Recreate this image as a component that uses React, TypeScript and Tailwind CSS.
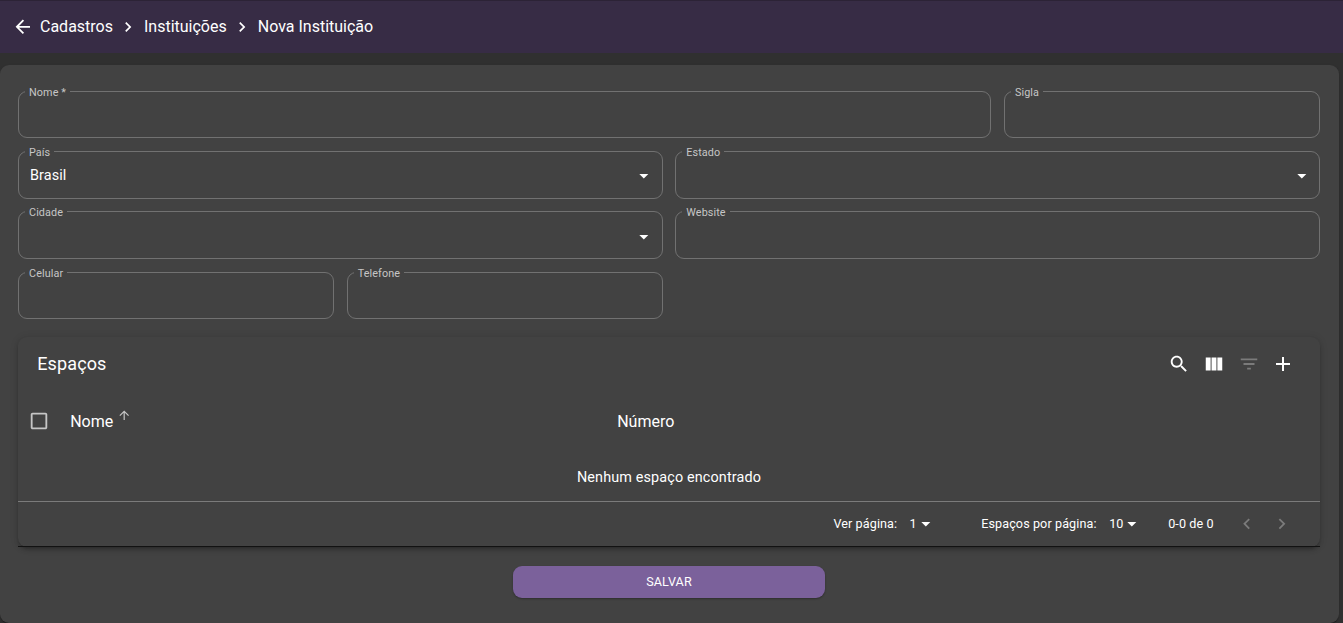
import React from "react";

function Icon({ d, className }: { d: string; className: string }) {
  return (
    <svg viewBox="0 0 24 24" fill="currentColor" aria-hidden="true" className={`block shrink-0 ${className}`}>
      <path d={d} />
    </svg>
  );
}

const arrowBack = "M20 11H7.83l5.59-5.59L12 4l-8 8 8 8 1.41-1.41L7.83 13H20v-2z";
const chevronRight = "M10 6L8.59 7.41 13.17 12l-4.58 4.59L10 18l6-6z";
const chevronLeft = "M15.41 7.41L14 6l-6 6 6 6 1.41-1.41L10.83 12z";
const dropDown = "M7 10l5 5 5-5z";
const search =
  "M15.5 14h-.79l-.28-.27C15.41 12.59 16 11.11 16 9.5 16 5.91 13.09 3 9.5 3S3 5.91 3 9.5 5.91 16 9.5 16c1.61 0 3.09-.59 4.23-1.57l.27.28v.79l5 4.99L20.49 19l-4.99-5zm-6 0C7.01 14 5 11.99 5 9.5S7.01 5 9.5 5 14 7.01 14 9.5 11.99 14 9.5 14z";
const viewColumn = "M14.67 5v14H9.33V5h5.34zm1 14H21V5h-5.33v14zm-7.34 0V5H3v14h5.33z";
const filterList = "M10 18h4v-2h-4v2zM3 6v2h18V6H3zm3 7h12v-2H6v2z";
const add = "M19 13h-6v6h-2v-6H5v-2h6V5h2v6h6v2z";
const arrowUp = "M4 12l1.41 1.41L11 7.83V20h2V7.83l5.58 5.59L20 12l-8-8-8 8z";
const checkboxBlank =
  "M19 5v14H5V5h14m0-2H5c-1.1 0-2 .9-2 2v14c0 1.1.9 2 2 2h14c1.1 0 2-.9 2-2V5c0-1.1-.9-2-2-2z";

interface FieldProps {
  label: string;
  size: string;
  value?: string;
  arrow?: string;
}

function Field({ label, size, value, arrow }: FieldProps) {
  return (
    <div className={`relative ${size}`}>
      <fieldset className="absolute inset-x-0 -top-[5px] bottom-0 rounded-[9px] border border-[#717171]">
        <legend className="ml-[6px] h-[11px] px-1 text-[10.8px] leading-[13px] tracking-[0.1px] whitespace-nowrap text-[#c6c6c6]">
          {label}
        </legend>
      </fieldset>
      <div className="flex h-full items-center justify-between pl-3">
        <span className="pt-px text-[14.4px] tracking-[0.1px]">{value}</span>
        {arrow && <Icon d={dropDown} className={`size-[21.6px] ${arrow}`} />}
      </div>
    </div>
  );
}

export default function App() {
  return (
    <div className="h-[623px] overflow-hidden bg-[#303030] font-['Roboto',sans-serif] text-white">
      <header className="flex h-[53px] items-center border-t border-[#2c2336] bg-[#372c45] pl-[12.4px] text-[16px]">
        <Icon d={arrowBack} className="size-[21.6px]" />
        <span className="ml-[6px]">Cadastros</span>
        <Icon d={chevronRight} className="mr-[6px] ml-[5px] size-[20px]" />
        <span>Instituições</span>
        <Icon d={chevronRight} className="mr-[6px] ml-[5px] size-[20px]" />
        <span>Nova Instituição</span>
      </header>

      <main className="mt-3 mr-1 h-[558px] rounded-[9px] bg-[#424242] pt-[26px] pr-[19px] pl-[18px] shadow-[0_2px_1px_-1px_rgba(0,0,0,0.2),0_1px_1px_0_rgba(0,0,0,0.14),0_1px_3px_0_rgba(0,0,0,0.12)]">
        <form className="grid grid-cols-4 grid-rows-[60px_60px_61px_47px] gap-x-[12.6px]">
          <Field label="Nome *" size="col-span-3 h-[47px]" />
          <Field label="Sigla" size="h-[47px]" />
          <Field label="País" size="col-span-2 h-[48px]" value="Brasil" arrow="mt-[2px] mr-[8px]" />
          <Field label="Estado" size="col-span-2 h-[48px]" arrow="mt-[2px] mr-[7.6px]" />
          <Field label="Cidade" size="col-span-2 h-[48px]" arrow="mt-[3px] mr-[8px]" />
          <Field label="Website" size="col-span-2 h-[48px]" />
          <Field label="Celular" size="h-[47px]" />
          <Field label="Telefone" size="h-[47px]" />
        </form>

        <section className="mt-[18px] flex h-[210px] flex-col rounded-[9px] shadow-[0_3px_3px_-2px_rgba(0,0,0,0.2),0_3px_4px_0_rgba(0,0,0,0.14),0_1px_8px_0_rgba(0,0,0,0.12)]">
          <div className="flex h-[54px] items-center justify-between pr-[25px] pl-[19.2px]">
            <h2 className="pb-[2px] text-[18px] tracking-[0.135px]">Espaços</h2>
            <div className="flex items-center">
              <Icon d={search} className="size-[22px]" />
              <Icon d={viewColumn} className="ml-[13px] size-[22px]" />
              <Icon d={filterList} className="ml-[13px] size-[22px] opacity-30" />
              <Icon d={add} className="ml-[11px] size-6" />
            </div>
          </div>
          <div className="flex h-[60px] items-center pl-[10px] text-[16px]">
            <Icon d={checkboxBlank} className="size-[22px] text-[#c6c6c6]" />
            <span className="ml-[20.2px] w-[43px] pt-[2px]">Nome</span>
            <Icon d={arrowUp} className="mb-[12px] ml-[3.6px] size-[14.4px] text-[#c6c6c6]" />
            <span className="ml-[486px] pt-[2px]">Número</span>
          </div>
          <div className="flex h-[50px] items-center justify-center pt-[3px] text-[14.4px] tracking-[0.135px]">
            Nenhum espaço encontrado
          </div>
          <div className="flex h-[46px] items-center border-t border-b border-t-[#7b7b7b] border-b-[#121212] pl-[815.4px] text-[12.6px] tracking-[0.1px]">
            <span className="w-[76px]">Ver página:</span>
            <span>1</span>
            <Icon d={dropDown} className="-ml-[1.8px] size-[21.6px]" />
            <span className="ml-[44.8px] w-[128px]">Espaços por página:</span>
            <span>10</span>
            <Icon d={dropDown} className="-ml-[2.8px] size-[21.6px]" />
            <span className="ml-[25.8px] w-[68px]">0-0 de 0</span>
            <Icon d={chevronLeft} className="size-[21.6px] text-[#7b7b7b]" />
            <Icon d={chevronRight} className="ml-[13.4px] size-[21.6px] text-[#7b7b7b]" />
          </div>
        </section>

        <button className="mx-auto mt-[19px] block h-8 w-[312px] rounded-[9px] bg-[#7b619b] text-[12.6px] tracking-[0.1px] shadow-[0_1px_2px_rgba(0,0,0,0.3)]">
          SALVAR
        </button>
      </main>
    </div>
  );
}
